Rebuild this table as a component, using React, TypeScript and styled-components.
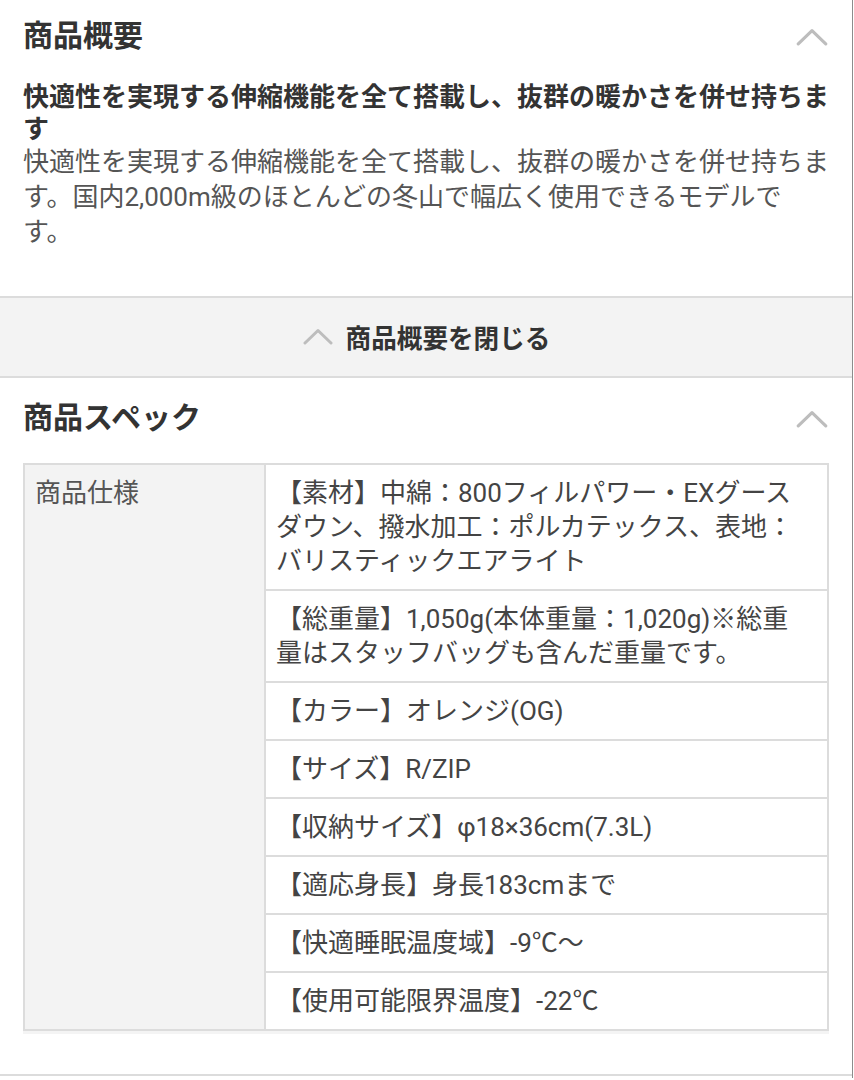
import React from "react";
import styled, { createGlobalStyle } from "styled-components";

const Global = createGlobalStyle`
  html, body { margin: 0; padding: 0; background: #fff; }
  body {
    font-family: Roboto, "Noto Sans CJK JP", "Noto Sans", sans-serif;
    -webkit-font-smoothing: antialiased;
  }
  * { box-sizing: border-box; }
`;

const Page = styled.div`
  width: 853px;
  border-right: 1px solid #8c8c8c;
  background: #fff;
  padding-bottom: 2px;
`;

const Section = styled.section<{ $top: number; $bottom: number; $last?: boolean }>`
  padding: ${(p) => p.$top}px 23px ${(p) => p.$bottom}px;
  border-bottom: ${(p) => (p.$last ? "2px solid #dcdcdc" : "none")};
`;

const Header = styled.div`
  display: flex;
  align-items: center;
  justify-content: space-between;
  height: 72px;
`;

const Title = styled.h2`
  margin: 0;
  font-size: 30px;
  font-weight: 700;
  color: #333;
  line-height: 36px;
`;

const Chevron = styled.svg<{ $w: number }>`
  width: ${(p) => p.$w}px;
  height: ${(p) => Math.round(p.$w * 0.55)}px;
  flex: none;
  display: block;
`;

const Up = ({ w }: { w: number }) => (
  <Chevron $w={w} viewBox="0 0 32 18" fill="none">
    <polyline points="3,16 16,3.5 29,16" stroke="#bdbdbd" strokeWidth="3" strokeLinecap="round" strokeLinejoin="round" />
  </Chevron>
);

const Lead = styled.p`
  margin: 9px 0 0;
  font-size: 26px;
  line-height: 32px;
  font-weight: 700;
  color: #333;
`;

const Body = styled.p`
  margin: 0;
  font-size: 26px;
  line-height: 35px;
  color: #555;
`;

const CloseBar = styled.button`
  display: flex;
  width: 100%;
  align-items: center;
  justify-content: center;
  gap: 12px;
  height: 82px;
  margin: 0;
  padding: 0 0 2px;
  background: #f3f3f3;
  border: none;
  border-top: 2px solid #dcdcdc;
  border-bottom: 2px solid #dcdcdc;
  font-family: inherit;
  font-size: 25.6px;
  font-weight: 700;
  color: #333;
`;

const SpecTable = styled.div`
  display: grid;
  grid-template-columns: 241px 1fr;
  margin-top: 9px;
  border: 2px solid #dcdcdc;
  box-shadow: 0 3px 0 #f4f4f4;
`;

const Label = styled.div<{ $rows: number }>`
  grid-row: 1 / span ${(p) => p.$rows};
  grid-column: 1;
  background: #f3f3f3;
  border-right: 2px solid #dcdcdc;
  padding: 11px 10px;
  font-size: 26px;
  line-height: 34px;
  color: #555;
`;

const Cell = styled.div<{ $last?: boolean }>`
  grid-column: 2;
  padding: 11px 14px 11px 10px;
  border-bottom: ${(p) => (p.$last ? "none" : "2px solid #dcdcdc")};
  font-size: 26px;
  line-height: 34px;
  color: #444;
`;

const specs = [
  "【素材】中綿：800フィルパワー・EXグースダウン、撥水加工：ポルカテックス、表地：バリスティックエアライト",
  "【総重量】1,050g(本体重量：1,020g)※総重量はスタッフバッグも含んだ重量です。",
  "【カラー】オレンジ(OG)",
  "【サイズ】R/ZIP",
  "【収納サイズ】φ18×36cm(7.3L)",
  "【適応身長】身長183cmまで",
  "【快適睡眠温度域】-9℃〜",
  "【使用可能限界温度】-22℃",
];

export default function App() {
  return (
    <Page>
      <Global />
      <Section $top={0} $bottom={46}>
        <Header>
          <Title>商品概要</Title>
          <Up w={34} />
        </Header>
        <Lead>快適性を実現する伸縮機能を全て搭載し、抜群の暖かさを併せ持ちます</Lead>
        <Body>
          快適性を実現する伸縮機能を全て搭載し、抜群の暖かさを併せ持ちます。国内2,000m級のほとんどの冬山で幅広く使用できるモデルです。
        </Body>
      </Section>
      <CloseBar>
        <Up w={32} />
        商品概要を閉じる
      </CloseBar>
      <Section $top={4} $bottom={43} $last>
        <Header>
          <Title>商品スペック</Title>
          <Up w={34} />
        </Header>
        <SpecTable>
          <Label $rows={specs.length}>商品仕様</Label>
          {specs.map((s, i) => (
            <Cell key={i} $last={i === specs.length - 1}>
              {s}
            </Cell>
          ))}
        </SpecTable>
      </Section>
    </Page>
  );
}
